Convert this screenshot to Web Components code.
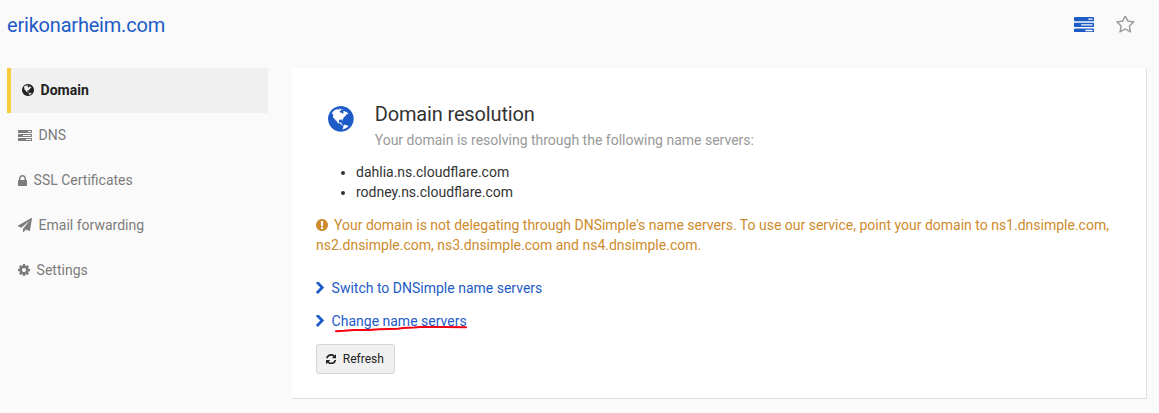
<!DOCTYPE html>
<html lang="en">
<head>
<meta charset="utf-8">
<title>erikonarheim.com</title>
<style>
html, body { margin: 0; height: 100%; }
body { background: #fafafa; font: 14px/20px Roboto, sans-serif; color: #333; overflow: hidden; }
</style>
</head>
<body>
<domain-page></domain-page>
<script>
const ICONS = {
  tasks: ['0 128 1792 1408', 'M1024 1408h640v-128h-640v128zm-384-512h1024v-128h-1024v128zm640-512h384v-128h-384v128zm512 832v256q0 26-19 45t-45 19h-1664q-26 0-45-19t-19-45v-256q0-26 19-45t45-19h1664q26 0 45 19t19 45zm0-512v256q0 26-19 45t-45 19h-1664q-26 0-45-19t-19-45v-256q0-26 19-45t45-19h1664q26 0 45 19t19 45zm0-512v256q0 26-19 45t-45 19h-1664q-26 0-45-19t-19-45v-256q0-26 19-45t45-19h1664q26 0 45 19t19 45z'],
  star: ['64 128 1664 1536', 'M1201 1004l306-297-422-62-189-382-189 382-422 62 306 297-73 421 378-199 377 199zm527-357q0 22-26 48l-363 354 86 500q1 7 1 20 0 50-41 50-19 0-40-12l-449-236-449 236q-22 12-40 12-21 0-31.5-14.5t-10.5-35.5q0-6 2-20l86-500-364-354q-25-27-25-48 0-37 56-46l502-73 225-455q19-41 49-41t49 41l225 455 502 73q56 9 56 46z'],
  chevron: ['346 128 1036 1536', 'M1363 877l-742 742q-19 19-45 19t-45-19l-166-166q-19-19-19-45t19-45l531-531-531-531q-19-19-19-45t19-45l166-166q19-19 45-19t45 19l742 742q19 19 19 45t-19 45z'],
  lock: ['320 128 1152 1408', 'M640 768h512v-192q0-106-75-181t-181-75-181 75-75 181v192zm832 96v576q0 40-28 68t-68 28h-960q-40 0-68-28t-28-68v-576q0-40 28-68t68-28h32v-192q0-184 132-316t316-132 316 132 132 316v192h32q40 0 68 28t28 68z'],
  cog: ['128 128 1536 1536', 'M1152 896q0-106-75-181t-181-75-181 75-75 181 75 181 181 75 181-75 75-181zm512-109v222q0 12-8 23t-20 13l-185 28q-19 54-39 91 35 50 107 138 10 12 10 25t-9 23q-27 37-99 108t-94 71q-12 0-26-9l-138-108q-44 23-91 38-16 136-29 186-7 28-36 28h-222q-14 0-24.5-8.5t-11.5-21.5l-28-184q-49-16-90-37l-141 107q-10 9-25 9-14 0-25-11-126-114-165-168-7-10-7-23 0-12 8-23 15-21 51-66.5t54-70.5q-27-50-41-99l-183-27q-13-2-21-12.5t-8-23.5v-222q0-12 8-23t19-13l186-28q14-46 39-92-40-57-107-138-10-12-10-24 0-10 9-23 26-36 98.5-107.5t94.5-71.5q13 0 26 10l138 107q44-23 91-38 16-136 29-186 7-28 36-28h222q14 0 24.5 8.5t11.5 21.5l28 184q49 16 90 37l142-107q9-9 24-9 13 0 25 10 129 119 165 170 7 8 7 22 0 12-8 23-15 21-51 66.5t-54 70.5q26 50 41 98l183 28q13 2 21 12.5t8 23.5z'],
  refresh: ['128 128 1536 1536', 'M1639 1056q0 5-1 7-64 268-268 434.5t-478 166.5q-146 0-282.5-55t-243.5-157l-129 129q-19 19-45 19t-45-19-19-45v-448q0-26 19-45t45-19h448q26 0 45 19t19 45-19 45l-137 137q71 66 161 102t187 36q134 0 250-65t186-179q11-17 53-117 8-23 30-23h192q13 0 22.5 9.5t9.5 22.5zm25-800v448q0 26-19 45t-45 19h-448q-26 0-45-19t-19-45 19-45l138-138q-148-137-349-137-134 0-250 65t-186 179q-11 17-53 117-8 23-30 23h-199q-13 0-22.5-9.5t-9.5-22.5v-7q65-268 270-434.5t480-166.5q146 0 284 55.5t245 156.5l130-129q19-19 45-19t45 19 19 45z'],
  warning: ['128 128 1536 1536', 'M896 128q209 0 385.5 103t279.5 279.5 103 385.5-103 385.5-279.5 279.5-385.5 103-385.5-103-279.5-279.5-103-385.5 103-385.5 279.5-279.5 385.5-103zm128 1247v-190q0-14-9-23.5t-22-9.5h-192q-13 0-23 10t-10 23v190q0 13 10 23t23 10h192q13 0 22-9.5t9-23.5zm-2-344l18-621q0-12-10-18-10-8-24-8h-220q-14 0-24 8-10 6-10 18l17 621q0 10 10 17.5t24 7.5h185q14 0 23.5-7.5t10.5-17.5z'],
  plane: ['0 0 1792 1792', 'M1764 11q33 24 27 64l-256 1536q-5 29-32 45-14 8-31 8-11 0-24-5l-453-185-242 295q-18 23-49 23-13 0-22-4-19-7-30.5-23.5t-11.500-36.500v-349l864-1059-1069 925-395-162q-37-14-40-55-2-40 32-59l1664-960q15-9 32-9 20 0 36 11z'],
  globe: ['128 128 1536 1536', 'M896 128q209 0 385.5 103t279.5 279.5 103 385.5-103 385.5-279.5 279.5-385.5 103-385.5-103-279.5-279.5-103-385.5 103-385.5 279.5-279.5 385.5-103zm274 521q-2 1-9.500 9.500t-13.500 9.500q2 0 4.500-5t5-11 3.500-7q6-7 22-15 14-6 52-12 34-8 51 11-2-2 9.500-13t14.500-12q3-2 15-4.500t15-7.500l2-22q-12 1-17.500-7t-6.500-21q0 2-6 8 0-7-4.500-8t-11.500 1-9 1q-10-3-15-7.500t-8-16.500-4-15q-2-5-9.500-11t-9.500-10q-1-2-2.500-5.500t-3-6.500-4-5.500-5.500-2.500-7 5-7.500 10-4.500 5q-3-2-6-1.500t-4.500 1-4.500 3-5 3.500q-3 2-8.500 3t-8.500 2q15-5-1-11-10-4-16-3 9-4 7.500-12t-8.500-14h5q-1-4-8.500-8.500t-17.500-8.500-13-6q-8-5-34-9.500t-33-.5q-5 6-4.500 10.500t4 14 3.500 12.500q1 6-5.500 13t-6.500 12q0 7 14 15.500t10 21.500q-3 8-16 16t-16 12q-5 8-1.500 18.500t10.500 16.500q2 2 1.500 4t-3.500 4.500-5.500 4-6.500 3.500l-3 2q-11 5-20.500-6t-13.500-26q-7-25-16-30-23-8-29 1-5-13-41-26-25-9-58-4 6-1 0-15-7-15-19-12 3-6 4-17.500t1-13.500q3-13 12-23 1-1 7-8.500t9.500-13.500.5-6q35 4 50-11 5-5 11.500-17t10.500-17q9-6 14-5.500t14.500 5.500 14.500 5q14 1 15.500-11t-7.500-20q12 1 3-17-4-7-8-9-12-4-27 5-8 4 2 8-1-1-9.500 10.500t-16.500 17.500-16-5q-1-1-5.500-13.500t-9.500-13.500q-8 0-16 15 3-8-11-15t-24-8q19-12-8-27-7-4-20.500-5t-19.500 4q-5 7-5.500 11.500t5 8 10.500 5.500 11.500 4 8.500 3q14 10 8 14-2 1-8.500 3.500t-11.500 4.500-6 4q-3 4 0 14t-2 14q-5-5-9-17.500t-7-16.500q7 9-25 6l-10-1q-4 0-16 2t-20.500 1-13.500-8q-4-8 0-20 1-4 4-2-4-3-11-9.500t-10-8.500q-46 15-94 41 6 1 12-1 5-2 13-6.500t10-5.500q34-14 42-7l5-5q14 16 20 25-7-4-30-1-20 6-22 12 7 12 5 18-4-3-11.500-10t-14.500-11-15-5q-16 0-22 1-146 80-235 222 7 7 12 8 4 1 5 9t2.500 11 11.500-3q9 8 3 19 1-1 44 27 19 17 21 21 3 11-10 18-1-2-9-9t-9-4q-3 5 .5 18.500t10.500 12.500q-7 0-9.500 16t-2.500 35.500-1 23.500l2 1q-3 12 5.500 34.500t21.500 19.500q-13 3 20 43 6 8 8 9 3 2 12 7.500t15 10 10 10.500q4 5 10 22.500t14 23.500q-2 6 9.500 20t10.500 23q-1 0-2.500 1t-2.500 1q3 7 15.500 14t15.500 13q1 3 2 10t3 11 8 2q2-20-24-62-15-25-17-29-3-5-5.500-15.500t-4.500-14.500q2 0 6 1.500t8.500 3.500 7.500 4 2 3q-3 7 2 17.500t12 18.500 17 19 12 13q6 6 14 19.500t0 13.500q9 0 20 10.500t17 19.500q5 8 8 26t5 24q2 7 8.500 13.500t12.500 9.500l16 8 13 7q5 2 18.500 10.500t21.500 11.500q10 4 16 4t14.500-2.500 13.500-3.500q15-2 29 15t21 21q36 19 55 11-2 1 .5 7.500t8 15.500 9 14.500 5.500 8.500q5 6 18 15t18 15q6-4 7-9-3 8 7 20t18 10q14-3 14-32-31 15-49-18 0-1-2.500-5.500t-4-8.500-2.500-8.500 0-7.500 5-3q9 0 10-3.500t-2-12.500-4-13q-1-8-11-20t-12-15q-5 9-16 8t-16-9q0 1-1.500 5.500t-1.500 6.500q-13 0-15-1 1-3 2.500-17.500t3.500-22.500q1-4 5.500-12t7.500-14.500 4-12.500-4.500-9.500-17.500-2.500q-19 1-26 20-1 3-3 10.500t-5 11.500-9 7q-7 3-24 2t-24-5q-13-8-22.500-29t-9.500-37q0-10 2.500-26.500t3-25-5.500-24.500q3-2 9-9.500t10-10.500q2-1 4.500-1.500t4.500 0 4-1.500 3-6q-1-1-4-3-3-3-4-3 7 3 28.500-1.500t27.500 1.500q15 11 22-2 0-1-2.500-9.500t-.5-13.500q5 27 29 9 3 3 15.500 5t17.500 5q3 2 7 5.500t5.500 4.500 5-.5 8.500-6.500q10 14 12 24 11 40 19 44 7 3 11 2t4.500-9.500 0-14-1.500-12.500l-1-8v-18l-1-8q-15-3-18.500-12t1.500-18.500 15-18.500q1-1 8-3.500t15.500-6.500 12.500-8q21-19 15-35 7 0 11-9-1 0-5-3t-7.500-5-4.500-2q9-5 2-16 5-3 7.500-11t7.500-10q9 12 21 2 7-8 1-16 5-7 20.500-10.500t18.500-9.500q7 2 8-2t1-12 3-12q4-5 15-9t13-5l17-11q3-4 0-4 18 2 31-11 10-11-6-20 3-6-3-9.500t-15-5.500q3-1 11.500-.5t10.500-1.500q15-10-7-16-17-5-43 12zm-163 877q206-36 351-189-3-3-12.500-4.500t-12.500-3.500q-18-7-24-8 1-7-2.500-13t-8-9-12.500-8-11-7q-2-2-7-6t-7-5.500-7.500-4.500-8.500-2-10 1l-3 1q-3 1-5.500 2.500t-5.500 3-4 3 0 2.500q-21-17-36-22-5-1-11-5.500t-10.500-7-10-1.500-11.500 7q-5 5-6 15t-2 13q-7-5 0-17.500t2-18.500q-3-6-10.500-4.500t-12 4.500-11.500 8.500-9 6.500-8.500 5.500-8.500 7.500q-3 4-6 12t-5 11q-2-4-11.500-6.500t-9.500-5.500q2 10 4 35t5 38q7 31-12 48-27 25-29 40-4 22 12 26 0 7-8 20.500t-7 21.500q0 6 2 16z']
};

function define(name, html) {
  const template = document.createElement('template');
  template.innerHTML = html;
  customElements.define(name, class extends HTMLElement {
    constructor() {
      super();
      this.attachShadow({ mode: 'open' }).append(template.content.cloneNode(true));
    }
  });
}

// <fa-icon name size>: size is the font size, 1792 units tall
customElements.define('fa-icon', class extends HTMLElement {
  connectedCallback() {
    if (this.shadowRoot) return;
    const [box, path] = ICONS[this.getAttribute('name')];
    const [, , w, h] = box.split(' ').map(Number);
    const k = (Number(this.getAttribute('size')) || 14) / 1792;
    this.attachShadow({ mode: 'open' }).innerHTML =
      `<style>:host{display:inline-block;flex:none;line-height:0}svg{display:block;fill:currentColor}</style>
       <svg width="${w * k}" height="${h * k}" viewBox="${box}"><path fill-rule="evenodd" d="${path}"/></svg>`;
  }
});

define('nav-item', `<style>
  :host { display: flex; align-items: center; height: 45px; box-sizing: border-box; padding: 0 0 1px 11px; color: #7c7c7c; gap: 6.6px; }
  :host([active]) { background: #f0f0f0; border-left: 4px solid #f9ca3a; color: #222; font-weight: 700; }
</style><slot name="icon"></slot><span><slot></slot></span>`);

define('page-header', `<style>
  :host { display: flex; align-items: center; justify-content: space-between; height: 50px; padding: 0 24px 0 7px; }
  h1 { margin: 0; font-size: 20px; font-weight: 400; line-height: 24px; letter-spacing: -0.2px; color: #1d5bc6; }
  div { display: flex; align-items: center; gap: 22px; color: #1d5bc6; padding-bottom: 1px; }
  .star { color: #999; }
</style><h1>erikonarheim.com</h1><div><fa-icon name="tasks" size="20"></fa-icon><fa-icon class="star" name="star" size="20"></fa-icon></div>`);

define('side-nav', `<style>:host { display: block; width: 261px; flex: none; }</style>
  <nav-item active><fa-icon slot="icon" name="globe"></fa-icon>Domain</nav-item>
  <nav-item><fa-icon slot="icon" name="tasks"></fa-icon>DNS</nav-item>
  <nav-item><fa-icon slot="icon" name="lock"></fa-icon>SSL Certificates</nav-item>
  <nav-item><fa-icon slot="icon" name="plane"></fa-icon>Email forwarding</nav-item>
  <nav-item><fa-icon slot="icon" name="cog"></fa-icon>Settings</nav-item>`);

define('action-link', `<style>
  :host { display: flex; align-items: center; height: 20px; gap: 7.5px; color: #1d5bc6; }
  .text { position: relative; }
</style><fa-icon name="chevron"></fa-icon><span class="text"><slot></slot></span>`);

define('refresh-button', `<style>
  :host { display: block; }
  button { display: flex; align-items: center; gap: 6.5px; width: 79px; height: 30px; box-sizing: border-box; padding: 0 9px; margin: 0;
    border: 1px solid #d5d5d5; border-radius: 3px; background: #f0f0f0; color: #222; font: 12px/18px Roboto, sans-serif; }
</style><button><fa-icon name="refresh" size="12"></fa-icon><span>Refresh</span></button>`);

define('resolution-card', `<style>
  :host { display: block; box-sizing: border-box; width: 855px; height: 331px; padding: 33px 24px 0; background: #fff; border-right: 1px solid #e0e0e0; border-bottom: 1px solid #e0e0e0; }
  header { display: flex; }
  header fa-icon { color: #1d5bc6; margin: 5px 21px 0 12px; }
  h2 { margin: 0; font-size: 20px; font-weight: 400; line-height: 26px; letter-spacing: -0.15px; color: #333; }
  header p { margin: 3px 0 0; color: #999; }
  ul { margin: 12px 0 0; padding: 0 0 0 40px; }
  .warn { margin: 13px 0 0; color: #cd8b2b; }
  .warn fa-icon { vertical-align: -1px; margin-right: 6px; }
  action-link { margin-top: 23px; }
  action-link + action-link { margin-top: 13px; }
  refresh-button { margin-top: 13px; }
  svg { position: absolute; left: 2px; top: 13px; overflow: visible; }
</style>
<header><fa-icon name="globe" size="30"></fa-icon><div><h2>Domain resolution</h2><p>Your domain is resolving through the following name servers:</p></div></header>
<ul><li>dahlia.ns.cloudflare.com</li><li>rodney.ns.cloudflare.com</li></ul>
<p class="warn"><fa-icon name="warning"></fa-icon>Your domain is not delegating through DNSimple's name servers. To use our service, point your domain to ns1.dnsimple.com, ns2.dnsimple.com, ns3.dnsimple.com and ns4.dnsimple.com.</p>
<action-link>Switch to DNSimple name servers</action-link>
<action-link>Change name servers<svg width="134" height="8" fill="none" stroke="#f5000f" stroke-width="2" stroke-linecap="round" stroke-linejoin="round"><path d="M2 7.200L10 6.800L20 6L35 6L45 5.200L64 4.800L69 4L80 3.500L86 3L110 3L132 3.300"/></svg></action-link>
<refresh-button></refresh-button>`);

define('domain-page', `<style>
  :host { display: block; }
  main { display: flex; gap: 24px; padding: 18px 0 0 7px; }
</style><page-header></page-header><main><side-nav></side-nav><resolution-card></resolution-card></main>`);
</script>
</body>
</html>
